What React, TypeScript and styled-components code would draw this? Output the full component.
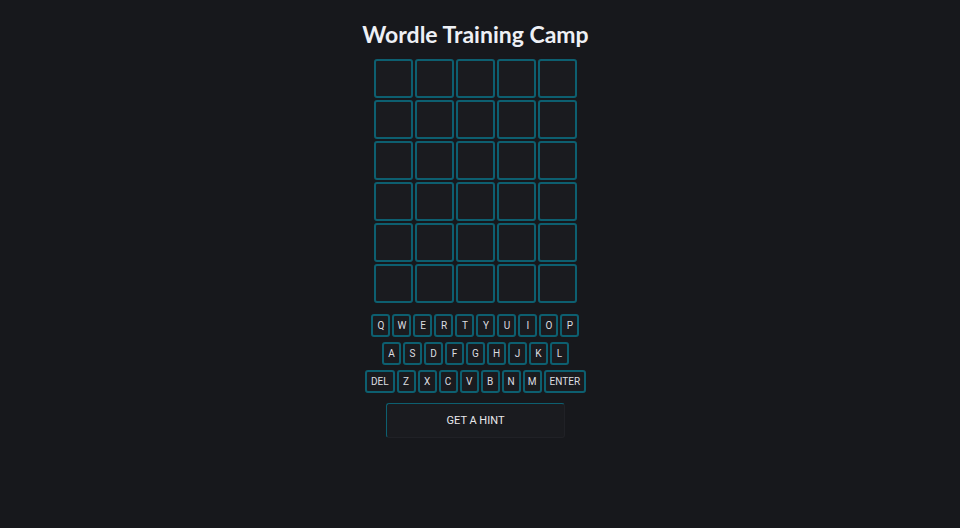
import React from "react";
import styled, { createGlobalStyle } from "styled-components";

const Global = createGlobalStyle`
  html, body { margin: 0; padding: 0; background: #17181c; }
  body { font-family: "Liberation Sans", Arial, sans-serif; color: #e8e8ea; }
`;

const Page = styled.div`
  display: flex;
  flex-direction: column;
  align-items: center;
  padding-top: 19px;
  padding-right: 9px;
`;

const Title = styled.h1`
  margin: 0 0 10px;
  font-family: Lato, sans-serif;
  font-weight: 700;
  font-size: 23px;
  line-height: 30px;
  color: #eef0f5;
`;

const Board = styled.div`
  display: grid;
  grid-template-columns: repeat(5, 39px);
  grid-auto-rows: 39px;
  gap: 2px;
`;

const Tile = styled.div`
  box-sizing: border-box;
  border: 2px solid #0d5f70;
  border-radius: 3px;
  background: #1a1b1f;
`;

const Keyboard = styled.div`
  display: flex;
  flex-direction: column;
  align-items: center;
  gap: 5px;
  margin-top: 11px;
`;

const KeyRow = styled.div`
  display: flex;
  gap: 2px;
`;

const Key = styled.button<{ $wide?: boolean }>`
  box-sizing: border-box;
  height: 23px;
  min-width: 19px;
  padding: 0 ${(p) => (p.$wide ? "4px" : "3px")};
  border: 2px solid #0d5f70;
  border-radius: 3px;
  background: #1a1b1f;
  color: #dcdde0;
  font-family: Roboto, "Liberation Sans", Arial, sans-serif;
  font-size: 10px;
  line-height: 19px;
  display: flex;
  align-items: center;
  justify-content: center;
  cursor: pointer;
`;

const HintButton = styled.button`
  box-sizing: border-box;
  margin-top: 10px;
  width: 179px;
  height: 35px;
  border: 1px solid #202126;
  border-top-color: #0d5f70;
  border-left-color: #0d5f70;
  border-radius: 3px;
  background: #1a1b1f;
  color: #e8e8ea;
  font-family: Roboto, "Liberation Sans", Arial, sans-serif;
  font-size: 11px;
  cursor: pointer;
`;

const rows = [
  ["Q", "W", "E", "R", "T", "Y", "U", "I", "O", "P"],
  ["A", "S", "D", "F", "G", "H", "J", "K", "L"],
  ["DEL", "Z", "X", "C", "V", "B", "N", "M", "ENTER"],
];

export default function App() {
  return (
    <>
      <Global />
      <Page>
        <Title>Wordle Training Camp</Title>
        <Board>
          {Array.from({ length: 30 }).map((_, i) => (
            <Tile key={i} />
          ))}
        </Board>
        <Keyboard>
          {rows.map((r, i) => (
            <KeyRow key={i}>
              {r.map((k) => (
                <Key key={k} $wide={k.length > 1}>
                  {k}
                </Key>
              ))}
            </KeyRow>
          ))}
        </Keyboard>
        <HintButton>GET A HINT</HintButton>
      </Page>
    </>
  );
}
